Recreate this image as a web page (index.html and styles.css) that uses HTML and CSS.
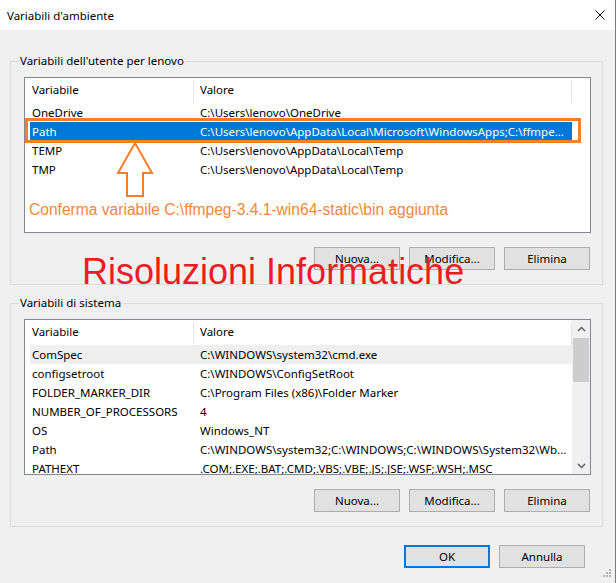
FILE: index.html
```
<!DOCTYPE html>
<html lang="it">

<head>
    <meta charset="UTF-8">
    <title>Variabili d'ambiente</title>
    <link rel="stylesheet" href="styles.css">
</head>

<body>
    <div class="window">
        <div class="titlebar">
            <span class="title">Variabili d'ambiente</span>
            <svg class="close" width="10" height="10" viewBox="0 0 10 10">
                <path d="M0.5 0.5L9.5 9.5M9.5 0.5L0.5 9.5" stroke="#000" stroke-width="1" fill="none" />
            </svg>
        </div>

        <div class="content">
            <fieldset class="group">
                <legend>Variabili dell'utente per lenovo</legend>
                <div class="group-body">
                    <div class="list">
                        <div class="list-main">
                            <div class="list-head">
                                <div class="head-name">Variabile</div>
                                <div class="head-value">Valore</div>
                            </div>
                            <div class="rows">
                                <div class="row"><div class="cell-name">OneDrive</div><div class="cell-value">C:\Users\lenovo\OneDrive</div></div>
                                <div class="row selected"><div class="cell-name">Path</div><div class="cell-value">C:\Users\lenovo\AppData\Local\Microsoft\WindowsApps;C:\ffmpe...</div></div>
                                <div class="row"><div class="cell-name">TEMP</div><div class="cell-value">C:\Users\lenovo\AppData\Local\Temp</div></div>
                                <div class="row"><div class="cell-name">TMP</div><div class="cell-value">C:\Users\lenovo\AppData\Local\Temp</div></div>
                            </div>
                        </div>
                        <!-- annotation drawn over the list -->
                        <div class="mark-box"></div>
                        <svg class="mark-arrow" width="40" height="58" viewBox="0 0 40 58">
                            <polygon points="19,2 36,32 27,32 27,55 11,55 11,32 2,32" fill="none" stroke="#f57f29" stroke-width="2" stroke-linejoin="miter" />
                        </svg>
                        <div class="mark-text">Conferma variabile C:\ffmpeg-3.4.1-win64-static\bin aggiunta</div>
                    </div>
                    <div class="buttons">
                        <button class="btn">Nuova...</button>
                        <button class="btn">Modifica...</button>
                        <button class="btn">Elimina</button>
                    </div>
                </div>
            </fieldset>

            <fieldset class="group group-system">
                <legend>Variabili di sistema</legend>
                <div class="group-body">
                    <div class="list">
                        <div class="list-main">
                            <div class="list-head">
                                <div class="head-name">Variabile</div>
                                <div class="head-value">Valore</div>
                            </div>
                            <div class="rows">
                                <div class="row hover"><div class="cell-name">ComSpec</div><div class="cell-value">C:\WINDOWS\system32\cmd.exe</div></div>
                                <div class="row"><div class="cell-name">configsetroot</div><div class="cell-value">C:\WINDOWS\ConfigSetRoot</div></div>
                                <div class="row"><div class="cell-name">FOLDER_MARKER_DIR</div><div class="cell-value">C:\Program Files (x86)\Folder Marker</div></div>
                                <div class="row"><div class="cell-name">NUMBER_OF_PROCESSORS</div><div class="cell-value">4</div></div>
                                <div class="row"><div class="cell-name">OS</div><div class="cell-value">Windows_NT</div></div>
                                <div class="row"><div class="cell-name">Path</div><div class="cell-value">C:\WINDOWS\system32;C:\WINDOWS;C:\WINDOWS\System32\Wb...</div></div>
                                <div class="row"><div class="cell-name">PATHEXT</div><div class="cell-value">.COM;.EXE;.BAT;.CMD;.VBS;.VBE;.JS;.JSE;.WSF;.WSH;.MSC</div></div>
                            </div>
                        </div>
                        <div class="scrollbar">
                            <div class="sb-arrow">
                                <svg width="9" height="6" viewBox="0 0 9 6"><polyline points="1,5 4.5,1.5 8,5" fill="none" stroke="#606060" stroke-width="1.5" /></svg>
                            </div>
                            <div class="sb-thumb"></div>
                            <div class="sb-track"></div>
                            <div class="sb-arrow">
                                <svg width="9" height="6" viewBox="0 0 9 6"><polyline points="1,1 4.5,4.5 8,1" fill="none" stroke="#606060" stroke-width="1.5" /></svg>
                            </div>
                        </div>
                    </div>
                    <div class="buttons">
                        <button class="btn">Nuova...</button>
                        <button class="btn">Modifica...</button>
                        <button class="btn">Elimina</button>
                    </div>
                </div>
            </fieldset>

            <div class="dialog-buttons">
                <button class="btn btn-default">OK</button>
                <button class="btn">Annulla</button>
            </div>
        </div>

        <div class="watermark">Risoluzioni Informatiche</div>

        <svg class="grip" width="12" height="12" viewBox="0 0 12 12">
            <rect x="9" y="0" width="2" height="2" fill="#b4b4b4" />
            <rect x="6" y="3" width="2" height="2" fill="#b4b4b4" />
            <rect x="9" y="3" width="2" height="2" fill="#b4b4b4" />
            <rect x="3" y="6" width="2" height="2" fill="#b4b4b4" />
            <rect x="6" y="6" width="2" height="2" fill="#b4b4b4" />
            <rect x="9" y="6" width="2" height="2" fill="#b4b4b4" />
        </svg>
    </div>
</body>

</html>
```

FILE: styles.css
```
:root {
    --ui-font: "Noto Sans", "DejaVu Sans", sans-serif;
    --orange: #f57f29;
    --select-blue: #0078d7;
}

body {
    margin: 0;
    background-color: #f0f0f0;
    font-family: var(--ui-font);
    font-size: 11.5px;
    color: #000;
}

.window {
    position: relative;
    width: 616px;
    height: 583px;
    box-sizing: border-box;
    border-right: 1px solid #7a7a7a;
    background-color: #f0f0f0;
    overflow: hidden;
}

.titlebar {
    display: flex;
    align-items: center;
    justify-content: space-between;
    height: 30px;
    padding: 0 10px 0 7px;
    background-color: #fff;
}

.content {
    padding: 0 12px 0 10px;
}

.group {
    margin: 23px 0 0 0;
    padding: 0;
    border: 1px solid #dcdcdc;
    min-inline-size: 0;
}

.group-system {
    margin-top: 10px;
}

.group legend {
    margin-left: 8px;
    padding: 0 1px;
    line-height: 16px;
}

.group-body {
    padding: 8px 11px 14px 13px;
}

.list {
    position: relative;
    display: flex;
    width: 567px;
    height: 156px;
    box-sizing: border-box;
    border: 1px solid #828790;
    background-color: #fff;
}

.list-main {
    flex: 1;
    overflow: hidden;
}

.list-head {
    display: flex;
    height: 25px;
    line-height: 24px;
}

.head-name,
.head-value {
    flex-shrink: 0;
    box-sizing: border-box;
    background: linear-gradient(#e5e5e5, #e5e5e5) right 2px / 1px 23px no-repeat;
}

.head-name {
    width: 169px;
    padding-left: 7px;
}

.head-value {
    width: 378px;
    padding-left: 6px;
}

.rows {
    padding-left: 5px;
}

.row {
    display: flex;
    width: 542px;
    height: 19px;
    line-height: 19px;
    white-space: nowrap;
    overflow: hidden;
}

.row.selected {
    background-color: var(--select-blue);
    color: #fff;
}

.row.hover {
    background-color: #efefef;
}

.cell-name {
    flex-shrink: 0;
    width: 163px;
    padding-left: 2px;
    box-sizing: border-box;
}

.cell-value {
    padding-left: 7px;
}

.scrollbar {
    display: flex;
    flex-direction: column;
    width: 18px;
    background-color: #f0f0f0;
}

.sb-arrow {
    display: flex;
    align-items: center;
    justify-content: center;
    height: 17px;
}

.sb-thumb {
    height: 44px;
    margin: 1px 1px 0 1px;
    background-color: #cdcdcd;
}

.sb-track {
    flex: 1;
}

.mark-box {
    position: absolute;
    left: 0;
    top: 40px;
    width: 556px;
    height: 25px;
    box-sizing: border-box;
    border: 3px solid var(--orange);
}

.mark-arrow {
    position: absolute;
    left: 91px;
    top: 63px;
}

.mark-text {
    position: absolute;
    left: 4px;
    top: 123px;
    font-family: "Liberation Sans", Arial, sans-serif;
    font-size: 15.6px;
    line-height: 18px;
    color: #f7873a;
    white-space: nowrap;
}

.buttons {
    display: flex;
    justify-content: flex-end;
    gap: 9px;
    margin-top: 14px;
    margin-right: 1px;
}

.btn {
    width: 86px;
    height: 23px;
    box-sizing: border-box;
    padding: 0;
    border: 1px solid #adadad;
    background-color: #e1e1e1;
    font-family: var(--ui-font);
    font-size: 11.5px;
    color: #000;
}

.btn-default {
    border: 2px solid var(--select-blue);
}

.dialog-buttons {
    display: flex;
    justify-content: flex-end;
    gap: 9px;
    margin-top: 18px;
    margin-right: 18px;
}

.watermark {
    position: absolute;
    left: 82px;
    top: 254px;
    font-family: "Liberation Sans", Arial, sans-serif;
    font-size: 36px;
    line-height: 36px;
    color: #ed1c24;
    white-space: nowrap;
}

.grip {
    position: absolute;
    right: 3px;
    bottom: 2px;
}
```
